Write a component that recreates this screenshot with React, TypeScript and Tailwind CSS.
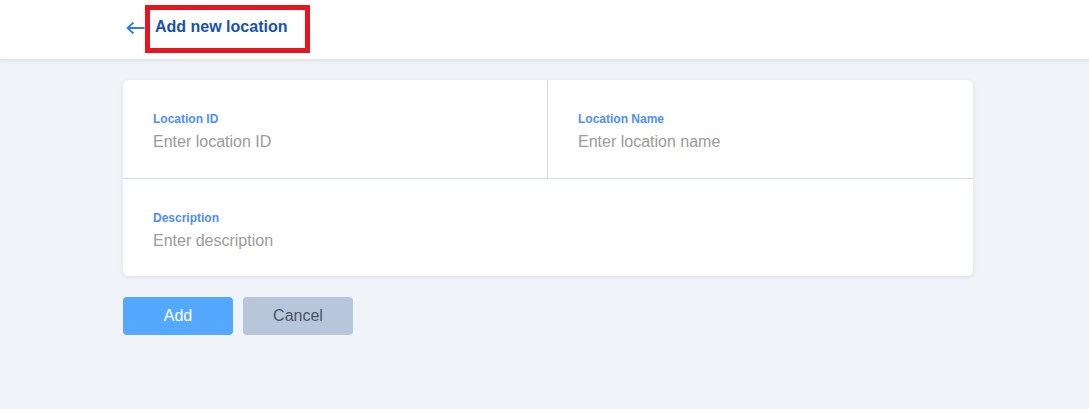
import React from "react";

type Field = {
  label: string;
  placeholder: string;
};

function FormCell({ label, placeholder, className }: Field & { className?: string }) {
  return (
    <div className={"px-[30px] pt-[31px] " + (className || "")}>
      <label className="block text-xs leading-4 font-bold text-[#4d8ef7]">{label}</label>
      <input
        type="text"
        placeholder={placeholder}
        className="block w-full h-6 mt-[3px] text-base leading-6 outline-none bg-transparent text-gray-700 placeholder:text-[#9b9b9b]"
      />
    </div>
  );
}

export default function App() {
  return (
    <div className="min-h-[409px] bg-[#f0f3f7] font-['Liberation_Sans',Arial,sans-serif]">
      <header className="h-[60px] bg-white shadow-[0_1px_3px_rgba(15,23,42,0.08)] border-b border-[#e3e7ec] flex items-center pl-[126px]">
        <button className="w-[19px] text-[#2f7be6] -mt-[3px]">
          <svg width="19" height="14" viewBox="0 0 19 14" fill="none" stroke="currentColor" strokeWidth="1.8">
            <path d="M18.5 7H1.5M7.5 1.5L1.5 7l6 5.5" />
          </svg>
        </button>
        <div className="h-[48px] flex items-center border-[5px] border-[#e4161f] pl-[5px] pr-[18px] -mt-[2px]">
          <h1 className="text-base font-bold text-[#1551b3] -mt-[3px]">Add new location</h1>
        </div>
      </header>

      <main className="pl-[123px] pt-[20px]">
        <div className="w-[850px] bg-white rounded-md shadow-[0_1px_4px_rgba(15,23,42,0.1)]">
          <div className="grid grid-cols-2 border-b border-[#cfd8e3]">
            <FormCell label="Location ID" placeholder="Enter location ID" className="border-r border-[#cfd8e3] pb-[24px]" />
            <FormCell label="Location Name" placeholder="Enter location name" className="pb-[24px]" />
          </div>
          <FormCell label="Description" placeholder="Enter description" className="pb-[23px]" />
        </div>

        <div className="flex gap-[10px] mt-[21px]">
          <button className="w-[110px] h-[38px] rounded bg-[#55a8ff] text-white text-base">Add</button>
          <button className="w-[110px] h-[38px] rounded bg-[#b8c6dc] text-[#4a5466] text-base">Cancel</button>
        </div>
      </main>
    </div>
  );
}
